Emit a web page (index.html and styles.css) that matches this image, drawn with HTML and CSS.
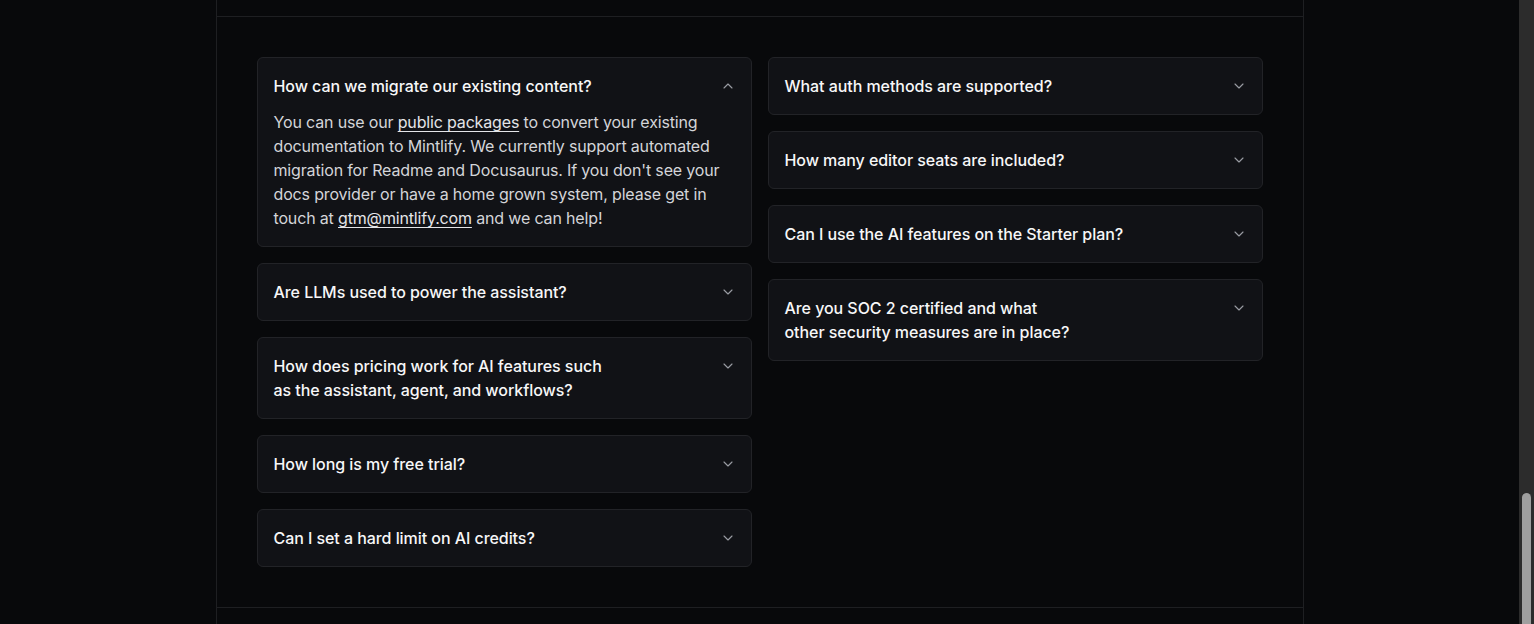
FILE: index.html
```html
<!DOCTYPE html>
<html lang="en">
<head>
<meta charset="utf-8">
<title>FAQ</title>
<link rel="stylesheet" href="styles.css">
</head>
<body>
<div class="page">
  <div class="frame">
    <div class="top-spacer"></div>
    <section class="faq">
      <div class="col">
        <div class="item open">
          <div class="head">
            <span class="q">How can we migrate our existing content?</span>
            <svg class="chev" viewBox="0 0 24 24"><path d="m18 15-6-6-6 6"/></svg>
          </div>
          <p class="answer">You can use our <a href="#">public packages</a> to convert your existing documentation to Mintlify. We currently support automated migration for Readme and Docusaurus. If you don't see your docs provider or have a home grown system, please get in touch at <a href="#">gtm@mintlify.com</a> and we can help!</p>
        </div>
        <div class="item">
          <div class="head">
            <span class="q">Are LLMs used to power the assistant?</span>
            <svg class="chev" viewBox="0 0 24 24"><path d="m6 9 6 6 6-6"/></svg>
          </div>
        </div>
        <div class="item">
          <div class="head">
            <span class="q">How does pricing work for AI features such<br>as the assistant, agent, and workflows?</span>
            <svg class="chev" viewBox="0 0 24 24"><path d="m6 9 6 6 6-6"/></svg>
          </div>
        </div>
        <div class="item">
          <div class="head">
            <span class="q">How long is my free trial?</span>
            <svg class="chev" viewBox="0 0 24 24"><path d="m6 9 6 6 6-6"/></svg>
          </div>
        </div>
        <div class="item">
          <div class="head">
            <span class="q">Can I set a hard limit on AI credits?</span>
            <svg class="chev" viewBox="0 0 24 24"><path d="m6 9 6 6 6-6"/></svg>
          </div>
        </div>
      </div>
      <div class="col">
        <div class="item">
          <div class="head">
            <span class="q">What auth methods are supported?</span>
            <svg class="chev" viewBox="0 0 24 24"><path d="m6 9 6 6 6-6"/></svg>
          </div>
        </div>
        <div class="item">
          <div class="head">
            <span class="q">How many editor seats are included?</span>
            <svg class="chev" viewBox="0 0 24 24"><path d="m6 9 6 6 6-6"/></svg>
          </div>
        </div>
        <div class="item">
          <div class="head">
            <span class="q">Can I use the AI features on the Starter plan?</span>
            <svg class="chev" viewBox="0 0 24 24"><path d="m6 9 6 6 6-6"/></svg>
          </div>
        </div>
        <div class="item">
          <div class="head">
            <span class="q">Are you SOC 2 certified and what<br>other security measures are in place?</span>
            <svg class="chev" viewBox="0 0 24 24"><path d="m6 9 6 6 6-6"/></svg>
          </div>
        </div>
      </div>
    </section>
  </div>
</div>
<div class="scrollbar"><div class="thumb"></div></div>
</body>
</html>
```

FILE: styles.css
```css
html, body {
  margin: 0;
  padding: 0;
  height: 624px;
  overflow: hidden;
}
body {
  background: #08090b;
  display: flex;
  font-family: Inter, "Noto Sans", sans-serif;
  color: #f5f5f6;
}
.page {
  flex: 1;
  display: flex;
  justify-content: center;
}
.frame {
  width: 1086px;
  border-left: 1px solid #1e1f22;
  border-right: 1px solid #1e1f22;
  height: 624px;
}
.top-spacer {
  height: 16px;
}
.faq {
  border-top: 1px solid #1e1f22;
  border-bottom: 1px solid #1e1f22;
  padding: 40px;
  display: grid;
  grid-template-columns: 1fr 1fr;
  column-gap: 16px;
  align-items: start;
}
.col {
  display: flex;
  flex-direction: column;
  gap: 16px;
}
.item {
  background: #111216;
  border: 1px solid #222327;
  border-radius: 6px;
  padding: 16px;
}
.head {
  display: flex;
  justify-content: space-between;
  align-items: flex-start;
}
.q {
  font-size: 16px;
  line-height: 24px;
  font-weight: 500;
  letter-spacing: -0.06px;
  color: #f7f7f8;
}
.chev {
  width: 16px;
  height: 16px;
  margin-top: 4px;
  margin-right: -1px;
  flex: none;
  fill: none;
  stroke: #9a9ca3;
  stroke-width: 1.7;
  stroke-linecap: round;
  stroke-linejoin: round;
}
.answer {
  margin: 12px 0 0;
  font-size: 16px;
  line-height: 24px;
  letter-spacing: -0.16px;
  color: #d4d5d9;
}
.answer a {
  color: #e4e5e8;
  text-decoration: underline;
  text-underline-offset: 3px;
  text-decoration-thickness: 1px;
}
.scrollbar {
  width: 15px;
  flex: none;
  background: #2c2c2c;
  display: flex;
  flex-direction: column;
}
.thumb {
  margin: 493px 3px 0 3px;
  flex: 1;
  background: #9f9f9f;
  border-radius: 5px 5px 0 0;
}
```
